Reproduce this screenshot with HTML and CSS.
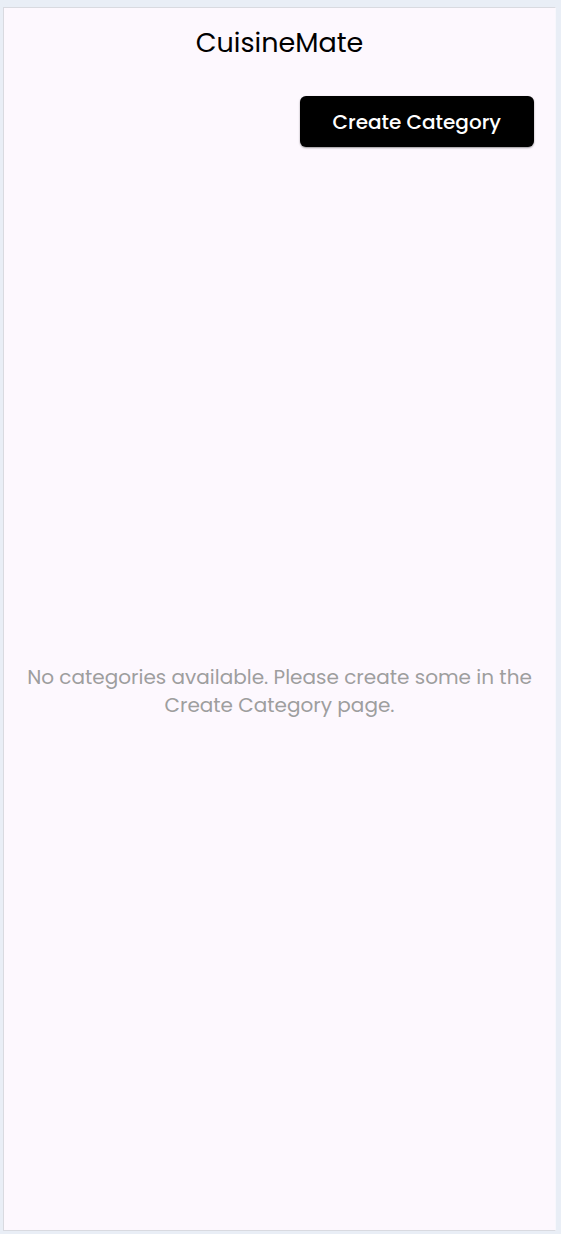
FILE: index.html
```html
<!DOCTYPE html>
<html lang="en">
<head>
<meta charset="utf-8">
<meta name="viewport" content="width=device-width, initial-scale=1">
<title>CuisineMate</title>
<link rel="stylesheet" href="styles.css">
</head>
<body>
<div class="screen">
  <header class="app-bar"><h1 class="app-title">CuisineMate</h1></header>
  <div class="actions"><button class="create-button" type="button">Create Category</button></div>
  <main class="empty-state"><p class="empty-message">No categories available. Please create some in the Create Category page.</p></main>
</div>
</body>
</html>
```

FILE: styles.css
```css
* { box-sizing: border-box; }
body {
  margin: 0;
  min-height: 100vh;
  padding: 7px 5px 3px 3px;
  display: flex;
  background: #e9eef6;
  font-family: Poppins, "Open Sans", "Noto Sans", sans-serif;
}
.screen {
  flex: 1;
  display: flex;
  flex-direction: column;
  border: 1px solid #d9dae0;
  border-right-color: #f8f7fc;
  background: #fdf8fe;
}
.app-bar {
  height: 70px;
  display: flex;
  align-items: center;
  justify-content: center;
}
.app-title {
  margin: 0;
  font-size: 27px;
  font-weight: 400;
  line-height: 40px;
  color: #000;
}
.actions {
  display: flex;
  justify-content: flex-end;
  padding: 18px 21px 4px;
}
.create-button {
  height: 51px;
  padding: 0 33px;
  border: 0;
  border-radius: 6px;
  background: #000;
  color: #fff;
  font: inherit;
  font-size: 20px;
  font-weight: 500;
  box-shadow: 0 1px 2px rgba(0, 0, 0, 0.4);
}
.empty-state {
  flex: 1;
  display: flex;
  align-items: center;
  justify-content: center;
  padding: 0 20px;
}
.empty-message {
  margin: 0;
  font-size: 20px;
  line-height: 28px;
  text-align: center;
  color: #9e9e9e;
}
```
